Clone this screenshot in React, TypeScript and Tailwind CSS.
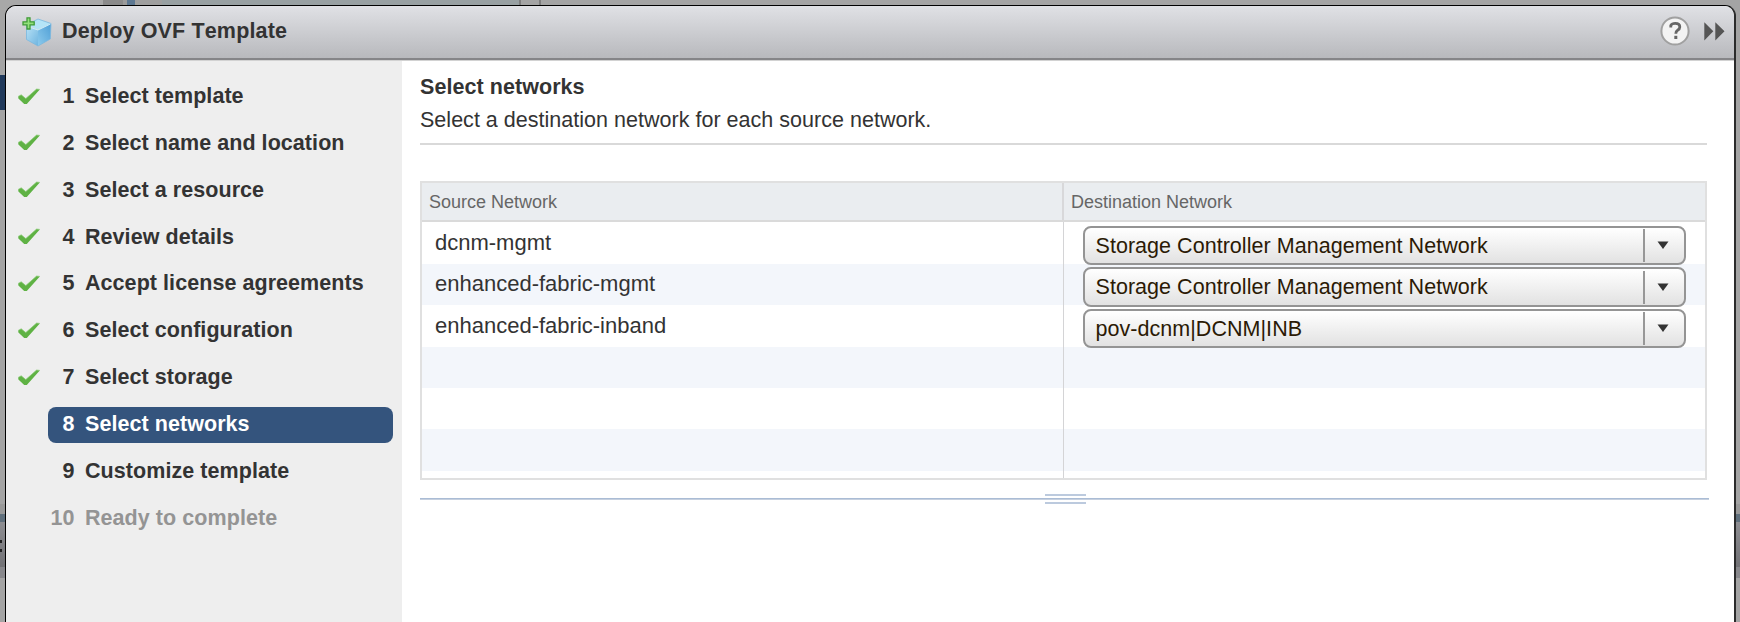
const steps = [
  "Select template",
  "Select name and location",
  "Select a resource",
  "Review details",
  "Accept license agreements",
  "Select configuration",
  "Select storage",
  "Select networks",
  "Customize template",
  "Ready to complete",
];
const current = 7;

const rows: { source: string; destination: string }[] = [
  { source: "dcnm-mgmt", destination: "Storage Controller Management Network" },
  { source: "enhanced-fabric-mgmt", destination: "Storage Controller Management Network" },
  { source: "enhanced-fabric-inband", destination: "pov-dcnm|DCNM|INB" },
  { source: "", destination: "" },
  { source: "", destination: "" },
  { source: "", destination: "" },
];

function TemplateIcon() {
  return (
    <svg className="mt-px h-[30px] w-[31px]" viewBox="0 0 31 30">
      <defs>
        <linearGradient id="cubeLeft" x1="0" y1="0" x2="1" y2="1">
          <stop offset="0" stopColor="#b9e2f6" />
          <stop offset="1" stopColor="#6fb5e0" />
        </linearGradient>
        <linearGradient id="cubeRight" x1="1" y1="0" x2="0" y2="1">
          <stop offset="0" stopColor="#4f9fd6" />
          <stop offset="1" stopColor="#8ccaec" />
        </linearGradient>
      </defs>
      <path d="M4.5 8 L16 2 L29 6.5 L16 12.5Z" fill="#b4e4f7" />
      <path d="M4 9 L16 13 V29 L4.5 22.5Z" fill="url(#cubeLeft)" />
      <path d="M16 13 L29 6.5 L28.3 22 L16 29Z" fill="url(#cubeRight)" />
      <path d="M4.5 8 L16 2 L29 6.5 L28.3 22 L16 29 L4.5 22.5Z" fill="none" stroke="#7ab8de" strokeWidth="0.8" />
      <path d="M5 9.3 L16 13 L28.5 7" fill="none" stroke="#d5f0fb" strokeWidth="0.9" />
      <path
        d="M5 0.8 H8 V4.8 H12.2 V7.8 H8 V12 H5 V7.8 H1 V4.8 H5Z"
        fill="#93e07c"
        stroke="#3f9a36"
        strokeWidth="1.3"
      />
    </svg>
  );
}

function CheckIcon() {
  return (
    <svg className="-mt-px h-[17px] w-6" viewBox="0 0 24 17">
      <path d="M1.2 8.4 L4.2 6.8 L8.8 10.6 L19.6 1 L22.8 1.4 L9.8 16 H7.2 L1.4 10.4Z" fill="#5fb244" />
      <path d="M1.2 8.4 L4.2 6.8 L8.8 10.6 L19.6 1 L22.8 1.4" fill="none" stroke="#8ccb78" strokeWidth="0.7" />
    </svg>
  );
}

function NetworkSelect({ value }: { value: string }) {
  return (
    <div className="relative z-10 mt-[3.6px] ml-[19px] flex h-[39.6px] w-[603px] shrink-0 items-center rounded-[8px] border-2 border-[#949494] bg-gradient-to-b from-white to-[#e2e2e2]">
      <span className="flex-1 pt-[2px] pl-[10.5px] tracking-[0.04px] text-[#2b1a05]">{value}</span>
      <span className="h-[33px] w-[2px] bg-[#979797]" />
      <span className="flex w-[39.5px] justify-center pr-[3px]">
        <svg className="-mt-px h-[8px] w-[12px]" viewBox="0 0 12 8">
          <path d="M0.5 0.5 H11.5 L6 8Z" fill="#333" />
        </svg>
      </span>
    </div>
  );
}

export default function App() {
  return (
    <div className="relative flex h-[622px] w-[1740px] overflow-hidden bg-[#a4a4a4] pt-[5px] pl-[5px] font-['Liberation_Sans',Arial,sans-serif] text-[21.5px] leading-none text-[#333] [font-kerning:none]">
      <div className="absolute top-0 left-0 flex h-[10px] w-full">
        <div className="w-[103px] bg-[#a8a8a8]" />
        <div className="w-[20px] bg-[#8b8b8b]" />
        <div className="w-[4px] bg-[#9b9b9b]" />
        <div className="w-[8px] bg-[#5d7892]" />
        <div className="w-[27px] bg-[#9f9f9f]" />
        <div className="w-[357px] bg-[#98a0a2]" />
        <div className="w-[2px] bg-[#7e7e7e]" />
        <div className="w-[18px] bg-[#a4a4a4]" />
        <div className="w-[2px] bg-[#7e7e7e]" />
      </div>
      <div className="absolute top-0 left-0 flex h-full w-full flex-col pt-[75px]">
        <div className="h-[35px] w-[5px] bg-[#20395b]" />
        <div className="mt-[394px] h-[10px] bg-[#999]" />
        <div className="h-[8px] bg-[#5f6f7c]" />
        <div className="h-[45px] bg-gradient-to-b from-[#8e8e92] to-[#727276]" />
        <div className="h-[11px] bg-[#88888c]" />
      </div>
      <div className="absolute top-[540px] left-0 h-[2.5px] w-[2px] bg-[#222]" />
      <div className="absolute top-[549px] left-0 h-[2.5px] w-[2px] bg-[#222]" />

      <div className="relative flex h-[640px] w-[1731px] flex-col overflow-hidden rounded-[11px] border border-r-2 border-black border-r-[#2b2b2b] bg-white">
        <header className="flex h-[54px] shrink-0 items-center border-b-2 border-[#858588] bg-gradient-to-b from-[#e0e1e5] to-[#b8b9bd] pr-[9px] pb-[2px] pl-[16px] font-bold">
          <TemplateIcon />
          <h1 className="ml-[9px] flex-1 pt-px tracking-[0.15px]">Deploy OVF Template</h1>
          <svg className="h-[30px] w-[30px]" viewBox="0 0 30 30">
            <circle cx="15" cy="15" r="13.6" fill="#f3f3f3" stroke="#a0a0a0" strokeWidth="2" />
            <path
              d="M10.8 11.6 V9.4 Q12 7.4 15.2 7.4 Q19.8 7.4 19.8 11 Q19.8 13 17.6 14.3 Q15.8 15.4 15.8 17.8"
              fill="none"
              stroke="#666"
              strokeWidth="2.8"
            />
            <rect x="14.3" y="19.8" width="3" height="3.2" fill="#666" />
          </svg>
          <svg className="ml-[14px] h-[19px] w-[21px]" viewBox="0 0 21 19">
            <path d="M0.3 0.3 L9.3 9.3 L0.3 18.5Z M11.3 0.3 L20.5 9.3 L11.3 18.5Z" fill="#555" />
          </svg>
        </header>

        <div className="flex flex-1 border-t border-[#d2d2d2]">
          <nav className="flex w-[396px] flex-col bg-[#eee] pt-[12.2px] font-bold">
            {steps.map((name, i) => (
              <div key={name} className="flex h-[46.85px] shrink-0 items-center">
                <div className="w-[41.5px] shrink-0 pl-[11px]">{i < current && <CheckIcon />}</div>
                <div
                  className={
                    i === current
                      ? "flex h-[36px] w-[345.5px] items-center rounded-[8px] bg-[#34547d] pt-[0.4px] text-white"
                      : i > current + 1
                        ? "flex h-[36px] w-[345.5px] items-center pt-[0.4px] text-[#949494]"
                        : "flex h-[36px] w-[345.5px] items-center pt-[0.4px]"
                  }
                >
                  <span className="w-[27px] text-right">{i + 1}</span>
                  <span className="ml-[10.5px] tracking-[0.06px]">{name}</span>
                </div>
              </div>
            ))}
          </nav>

          <main className="flex flex-1 flex-col pl-[18px]">
            <h2 className="mt-[15px] h-[22px] leading-[22px] font-bold tracking-[0.06px]">Select networks</h2>
            <p className="mt-[11px] h-[22px] leading-[22px] tracking-[0.02px]">
              Select a destination network for each source network.
            </p>
            <div className="mt-[12px] h-[2px] w-[1287px] bg-[#d9d9d9]" />

            <section className="mt-[36px] flex h-[299px] w-[1287px] flex-col overflow-hidden border-2 border-[#e0e0e0]">
              <div className="flex h-[39px] shrink-0 border-b-2 border-[#dadada] bg-[#eaedf0] text-[18px] text-[#666]">
                <div className="flex w-[642px] items-center border-r-2 border-[#d8d8da] pt-px pl-[7px]">Source Network</div>
                <div className="flex items-center pt-px pl-[7px]">Destination Network</div>
              </div>
              <div className="flex flex-1 flex-col">
                {rows.map((row, i) => (
                  <div
                    key={i}
                    className={
                      i === 0
                        ? "flex h-[41.8px] shrink-0"
                        : i % 2
                          ? "flex h-[41.4px] shrink-0 bg-[#f3f6fb]"
                          : "flex h-[41.4px] shrink-0"
                    }
                  >
                    <div className="w-[642px] shrink-0 border-r border-[#d4d4d6] pt-[9.6px] pl-[13px] text-[22px]">
                      {row.source}
                    </div>
                    {row.destination && <NetworkSelect value={row.destination} />}
                  </div>
                ))}
                <div className="w-[642px] flex-1 border-r border-[#d4d4d6]" />
              </div>
            </section>

            <div className="mt-[14px] flex w-[1289px] flex-col items-center">
              <div className="ml-[2px] h-[2px] w-[41px] bg-[#bccade]" />
              <div className="mt-[2px] h-[2px] w-full border-b border-[#c6d0df] bg-[#aabcd5]" />
              <div className="mt-[2px] ml-[2px] h-[2px] w-[41px] bg-[#bccade]" />
            </div>
          </main>
        </div>
      </div>
    </div>
  );
}
